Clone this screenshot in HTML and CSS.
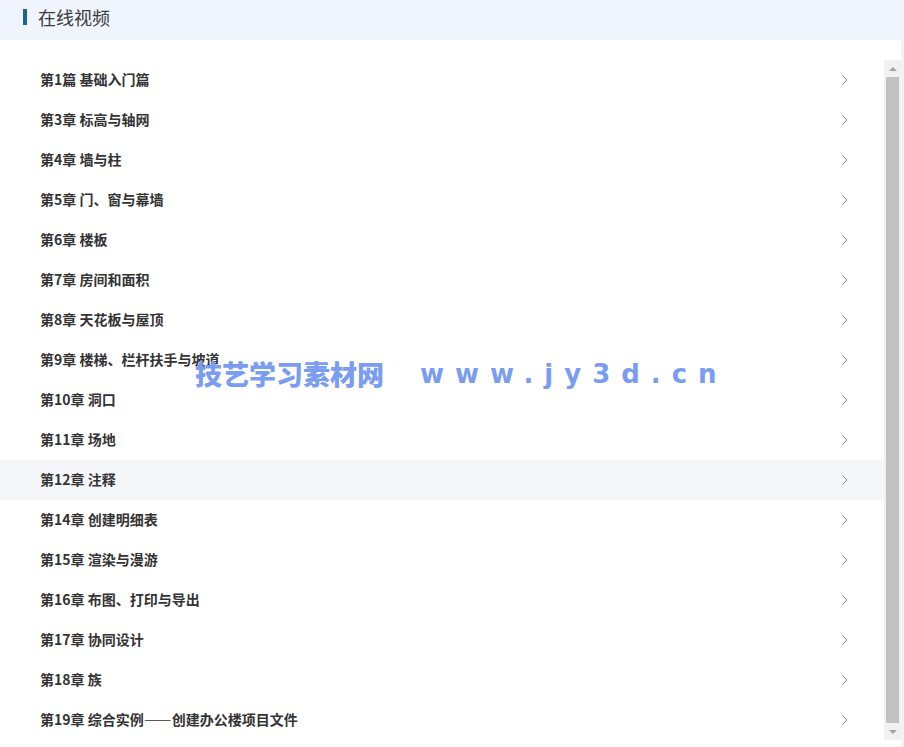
FILE: index.html
```html
<!DOCTYPE html>
<html lang="zh-CN">
<head>
<meta charset="utf-8">
<title>在线视频</title>
<link rel="stylesheet" href="styles.css">
</head>
<body>
<div class="page">
  <div class="header">
    <span class="bar"></span>
    <h2 class="title">在线视频</h2>
  </div>
  <div class="body-row">
    <ul class="list">
      <li class="item"><span class="name">第1篇 基础入门篇</span><svg class="chev" width="6" height="10" viewBox="0 0 6 10"><polyline points="0.5,0.5 5,5 0.5,9.5" fill="none" stroke="#8a8a8a" stroke-width="1"/></svg></li>
      <li class="item"><span class="name">第3章 标高与轴网</span><svg class="chev" width="6" height="10" viewBox="0 0 6 10"><polyline points="0.5,0.5 5,5 0.5,9.5" fill="none" stroke="#8a8a8a" stroke-width="1"/></svg></li>
      <li class="item"><span class="name">第4章 墙与柱</span><svg class="chev" width="6" height="10" viewBox="0 0 6 10"><polyline points="0.5,0.5 5,5 0.5,9.5" fill="none" stroke="#8a8a8a" stroke-width="1"/></svg></li>
      <li class="item"><span class="name">第5章 门、窗与幕墙</span><svg class="chev" width="6" height="10" viewBox="0 0 6 10"><polyline points="0.5,0.5 5,5 0.5,9.5" fill="none" stroke="#8a8a8a" stroke-width="1"/></svg></li>
      <li class="item"><span class="name">第6章 楼板</span><svg class="chev" width="6" height="10" viewBox="0 0 6 10"><polyline points="0.5,0.5 5,5 0.5,9.5" fill="none" stroke="#8a8a8a" stroke-width="1"/></svg></li>
      <li class="item"><span class="name">第7章 房间和面积</span><svg class="chev" width="6" height="10" viewBox="0 0 6 10"><polyline points="0.5,0.5 5,5 0.5,9.5" fill="none" stroke="#8a8a8a" stroke-width="1"/></svg></li>
      <li class="item"><span class="name">第8章 天花板与屋顶</span><svg class="chev" width="6" height="10" viewBox="0 0 6 10"><polyline points="0.5,0.5 5,5 0.5,9.5" fill="none" stroke="#8a8a8a" stroke-width="1"/></svg></li>
      <li class="item"><span class="name">第9章 楼梯、栏杆扶手与坡道</span><svg class="chev" width="6" height="10" viewBox="0 0 6 10"><polyline points="0.5,0.5 5,5 0.5,9.5" fill="none" stroke="#8a8a8a" stroke-width="1"/></svg></li>
      <li class="item"><span class="name">第10章 洞口</span><svg class="chev" width="6" height="10" viewBox="0 0 6 10"><polyline points="0.5,0.5 5,5 0.5,9.5" fill="none" stroke="#8a8a8a" stroke-width="1"/></svg></li>
      <li class="item"><span class="name">第11章 场地</span><svg class="chev" width="6" height="10" viewBox="0 0 6 10"><polyline points="0.5,0.5 5,5 0.5,9.5" fill="none" stroke="#8a8a8a" stroke-width="1"/></svg></li>
      <li class="item active"><span class="name">第12章 注释</span><svg class="chev" width="6" height="10" viewBox="0 0 6 10"><polyline points="0.5,0.5 5,5 0.5,9.5" fill="none" stroke="#8a8a8a" stroke-width="1"/></svg></li>
      <li class="item"><span class="name">第14章 创建明细表</span><svg class="chev" width="6" height="10" viewBox="0 0 6 10"><polyline points="0.5,0.5 5,5 0.5,9.5" fill="none" stroke="#8a8a8a" stroke-width="1"/></svg></li>
      <li class="item"><span class="name">第15章 渲染与漫游</span><svg class="chev" width="6" height="10" viewBox="0 0 6 10"><polyline points="0.5,0.5 5,5 0.5,9.5" fill="none" stroke="#8a8a8a" stroke-width="1"/></svg></li>
      <li class="item"><span class="name">第16章 布图、打印与导出</span><svg class="chev" width="6" height="10" viewBox="0 0 6 10"><polyline points="0.5,0.5 5,5 0.5,9.5" fill="none" stroke="#8a8a8a" stroke-width="1"/></svg></li>
      <li class="item"><span class="name">第17章 协同设计</span><svg class="chev" width="6" height="10" viewBox="0 0 6 10"><polyline points="0.5,0.5 5,5 0.5,9.5" fill="none" stroke="#8a8a8a" stroke-width="1"/></svg></li>
      <li class="item"><span class="name">第18章 族</span><svg class="chev" width="6" height="10" viewBox="0 0 6 10"><polyline points="0.5,0.5 5,5 0.5,9.5" fill="none" stroke="#8a8a8a" stroke-width="1"/></svg></li>
      <li class="item"><span class="name">第19章 综合实例——创建办公楼项目文件</span><svg class="chev" width="6" height="10" viewBox="0 0 6 10"><polyline points="0.5,0.5 5,5 0.5,9.5" fill="none" stroke="#8a8a8a" stroke-width="1"/></svg></li>
    </ul>
    <div class="scrollbar">
      <div class="sb-btn"><svg width="8" height="4" viewBox="0 0 8 4"><polygon points="0,4 8,4 4,0" fill="#a3a3a3"/></svg></div>
      <div class="sb-track"><div class="sb-thumb"></div></div>
      <div class="sb-btn"><svg width="8" height="4" viewBox="0 0 8 4"><polygon points="0,0 8,0 4,4" fill="#a3a3a3"/></svg></div>
    </div>
  </div>
  <div class="watermark"><span class="wm-cn">技艺学习素材网</span><span class="wm-en">www.jy3d.cn</span></div>
</div>
</body>
</html>
```
FILE: styles.css
```css
html, body {
  margin: 0;
  padding: 0;
}
body {
  background: #f3f3f3;
  font-family: "Noto Sans CJK SC", "Noto Sans", "Liberation Sans", sans-serif;
  color: #333;
}
.page {
  position: relative;
  width: 901px;
  height: 747px;
  background: #fff;
  overflow: hidden;
}
.header {
  height: 40px;
  background: #eff4fd;
  display: flex;
  align-items: center;
  padding-left: 23px;
  box-sizing: border-box;
}
.bar {
  width: 4px;
  height: 16px;
  background: #17688a;
  margin-right: 11px;
  margin-top: -7px;
}
.title {
  margin: 0;
  font-size: 18px;
  font-weight: normal;
  color: #3a3a3a;
  line-height: 24px;
  margin-top: -7px;
}
.body-row {
  margin-top: 20px;
  height: 680px;
  display: flex;
}
.list {
  flex: 1;
  list-style: none;
  margin: 0;
  padding: 0;
}
.item {
  height: 40px;
  display: flex;
  align-items: center;
  justify-content: space-between;
  padding: 0 36px 0 40px;
}
.item.active {
  background: #f5f6fa;
}
.name {
  font-size: 14px;
  font-weight: bold;
  color: #333;
  line-height: 20px;
  margin-top: -2px;
}
.chev {
  display: block;
  margin-top: -1px;
}
.scrollbar {
  width: 17px;
  background: #f1f1f1;
  display: flex;
  flex-direction: column;
}
.sb-btn {
  height: 17px;
  display: flex;
  align-items: center;
  justify-content: center;
}
.sb-track {
  flex: 1;
  padding: 0 2px;
  display: flex;
}
.sb-thumb {
  flex: 1;
  background: #c1c1c1;
}
.watermark {
  position: absolute;
  left: 195px;
  top: 356px;
  display: flex;
  align-items: center;
  color: #7a9df2;
  font-weight: bold;
  pointer-events: none;
}
.wm-cn {
  font-size: 27px;
  font-family: "Noto Sans CJK SC", sans-serif;
  font-weight: 900;
  line-height: 36px;
}
.wm-en {
  margin-left: 36px;
  font-size: 26px;
  letter-spacing: 11px;
  font-family: "DejaVu Sans", sans-serif;
  font-weight: bold;
  line-height: 36px;
}
```
